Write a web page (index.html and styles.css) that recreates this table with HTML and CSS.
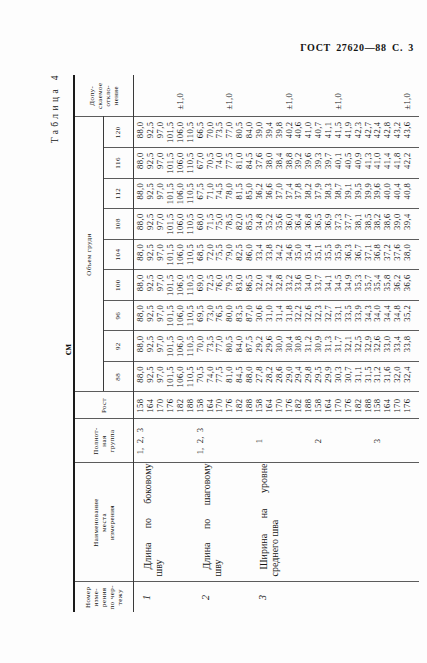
FILE: index.html
```html
<!DOCTYPE html>
<html lang="ru">
<head>
<meta charset="utf-8">
<title>ГОСТ 27620—88 С. 3</title>
<link rel="stylesheet" href="styles.css">
</head>
<body>
<div class="runhead">ГОСТ 27620—88 С. 3</div>
<div class="rotbox">
<div class="rot">
<div class="caption">Таблица 4</div>
<div class="unit">см</div>
<table class="tbl">
<colgroup>
<col class="c-no"><col class="c-name"><col class="c-grp"><col class="c-rost">
<col class="c-v"><col class="c-v"><col class="c-v"><col class="c-v"><col class="c-v"><col class="c-v"><col class="c-v"><col class="c-v"><col class="c-v">
<col class="c-tol">
</colgroup>
<thead>
<tr class="h1">
<th rowspan="2" class="first hno">Номер<br>изме-<br>рения<br>по чер-<br>тежу</th>
<th rowspan="2" class="hname">Наименование<br>места<br>измерения</th>
<th rowspan="2" class="hgrp">Полнот-<br>ная<br>группа</th>
<th rowspan="2" class="hrost">Рост</th>
<th colspan="9" class="hgroup">Объем груди</th>
<th rowspan="2" class="last htol">Допу-<br>скаемое<br>откло-<br>нение</th>
</tr>
<tr class="h2">
<th>88</th><th>92</th><th>96</th><th>100</th><th>104</th><th>108</th><th>112</th><th>116</th><th>120</th>
</tr>
</thead>
<tbody>
<tr class="gap"><td class="first"></td><td></td><td></td><td></td><td></td><td></td><td></td><td></td><td></td><td></td><td></td><td></td><td></td><td class="last"></td></tr>

<tr class="d"><td class="no first" rowspan="6">1</td><td class="name" rowspan="6"><div class="l1">Длина по боковому</div><div class="l2">шву</div></td><td class="grp">1, 2, 3</td><td class="rost">158</td><td>88,0</td><td>88,0</td><td>88,0</td><td>88,0</td><td>88,0</td><td>88,0</td><td>88,0</td><td>88,0</td><td>88,0</td><td class="tol last"></td></tr>
<tr class="d"><td class="grp"></td><td class="rost">164</td><td>92,5</td><td>92,5</td><td>92,5</td><td>92,5</td><td>92,5</td><td>92,5</td><td>92,5</td><td>92,5</td><td>92,5</td><td class="tol last"></td></tr>
<tr class="d"><td class="grp"></td><td class="rost">170</td><td>97,0</td><td>97,0</td><td>97,0</td><td>97,0</td><td>97,0</td><td>97,0</td><td>97,0</td><td>97,0</td><td>97,0</td><td class="tol last"></td></tr>
<tr class="d"><td class="grp"></td><td class="rost">176</td><td>101,5</td><td>101,5</td><td>101,5</td><td>101,5</td><td>101,5</td><td>101,5</td><td>101,5</td><td>101,5</td><td>101,5</td><td class="tol last"></td></tr>
<tr class="d"><td class="grp"></td><td class="rost">182</td><td>106,0</td><td>106,0</td><td>106,0</td><td>106,0</td><td>106,0</td><td>106,0</td><td>106,0</td><td>106,0</td><td>106,0</td><td class="tol last">±1,0</td></tr>
<tr class="d"><td class="grp"></td><td class="rost">188</td><td>110,5</td><td>110,5</td><td>110,5</td><td>110,5</td><td>110,5</td><td>110,5</td><td>110,5</td><td>110,5</td><td>110,5</td><td class="tol last"></td></tr>

<tr class="d"><td class="no first" rowspan="6">2</td><td class="name" rowspan="6"><div class="l1">Длина по шаговому</div><div class="l2">шву</div></td><td class="grp">1, 2, 3</td><td class="rost">158</td><td>70,5</td><td>70,0</td><td>69,5</td><td>69,0</td><td>68,5</td><td>68,0</td><td>67,5</td><td>67,0</td><td>66,5</td><td class="tol last"></td></tr>
<tr class="d"><td class="grp"></td><td class="rost">164</td><td>74,0</td><td>73,5</td><td>73,0</td><td>72,5</td><td>72,0</td><td>71,5</td><td>71,0</td><td>70,5</td><td>70,0</td><td class="tol last"></td></tr>
<tr class="d"><td class="grp"></td><td class="rost">170</td><td>77,5</td><td>77,0</td><td>76,5</td><td>76,0</td><td>75,5</td><td>75,0</td><td>74,5</td><td>74,0</td><td>73,5</td><td class="tol last"></td></tr>
<tr class="d"><td class="grp"></td><td class="rost">176</td><td>81,0</td><td>80,5</td><td>80,0</td><td>79,5</td><td>79,0</td><td>78,5</td><td>78,0</td><td>77,5</td><td>77,0</td><td class="tol last">±1,0</td></tr>
<tr class="d"><td class="grp"></td><td class="rost">182</td><td>84,5</td><td>84,0</td><td>83,5</td><td>83,0</td><td>82,5</td><td>82,0</td><td>81,5</td><td>81,0</td><td>80,5</td><td class="tol last"></td></tr>
<tr class="d"><td class="grp"></td><td class="rost">188</td><td>88,0</td><td>87,5</td><td>87,0</td><td>86,5</td><td>86,0</td><td>85,5</td><td>85,0</td><td>84,5</td><td>84,0</td><td class="tol last"></td></tr>

<tr class="d"><td class="no first g3" rowspan="16">3</td><td class="name g3" rowspan="16"><div class="l1">Ширина на уровне</div><div class="l2">среднего шва</div></td><td class="grp">1</td><td class="rost">158</td><td>27,8</td><td>29,2</td><td>30,6</td><td>32,0</td><td>33,4</td><td>34,8</td><td>36,2</td><td>37,6</td><td>39,0</td><td class="tol last"></td></tr>
<tr class="d"><td class="grp"></td><td class="rost">164</td><td>28,2</td><td>29,6</td><td>31,0</td><td>32,4</td><td>33,8</td><td>35,2</td><td>36,6</td><td>38,0</td><td>39,4</td><td class="tol last"></td></tr>
<tr class="d"><td class="grp"></td><td class="rost">170</td><td>28,6</td><td>30,0</td><td>31,4</td><td>32,8</td><td>34,2</td><td>35,6</td><td>37,0</td><td>38,4</td><td>39,8</td><td class="tol last"></td></tr>
<tr class="d"><td class="grp"></td><td class="rost">176</td><td>29,0</td><td>30,4</td><td>31,8</td><td>33,2</td><td>34,6</td><td>36,0</td><td>37,4</td><td>38,8</td><td>40,2</td><td class="tol last">±1,0</td></tr>
<tr class="d"><td class="grp"></td><td class="rost">182</td><td>29,4</td><td>30,8</td><td>32,2</td><td>33,6</td><td>35,0</td><td>36,4</td><td>37,8</td><td>39,2</td><td>40,6</td><td class="tol last"></td></tr>
<tr class="d"><td class="grp"></td><td class="rost">188</td><td>29,8</td><td>31,2</td><td>32,6</td><td>34,0</td><td>35,4</td><td>36,8</td><td>38,2</td><td>39,6</td><td>41,0</td><td class="tol last"></td></tr>
<tr class="d"><td class="grp">2</td><td class="rost">158</td><td>29,5</td><td>30,9</td><td>32,3</td><td>33,7</td><td>35,1</td><td>36,5</td><td>37,9</td><td>39,3</td><td>40,7</td><td class="tol last"></td></tr>
<tr class="d"><td class="grp"></td><td class="rost">164</td><td>29,9</td><td>31,3</td><td>32,7</td><td>34,1</td><td>35,5</td><td>36,9</td><td>38,3</td><td>39,7</td><td>41,1</td><td class="tol last"></td></tr>
<tr class="d"><td class="grp"></td><td class="rost">170</td><td>30,3</td><td>31,7</td><td>33,1</td><td>34,5</td><td>35,9</td><td>37,3</td><td>38,7</td><td>40,1</td><td>41,5</td><td class="tol last">±1,0</td></tr>
<tr class="d"><td class="grp"></td><td class="rost">176</td><td>30,7</td><td>32,1</td><td>33,5</td><td>34,9</td><td>36,3</td><td>37,7</td><td>39,1</td><td>40,5</td><td>41,9</td><td class="tol last"></td></tr>
<tr class="d"><td class="grp"></td><td class="rost">182</td><td>31,1</td><td>32,5</td><td>33,9</td><td>35,3</td><td>36,7</td><td>38,1</td><td>39,5</td><td>40,9</td><td>42,3</td><td class="tol last"></td></tr>
<tr class="d"><td class="grp"></td><td class="rost">188</td><td>31,5</td><td>32,9</td><td>34,3</td><td>35,7</td><td>37,1</td><td>38,5</td><td>39,9</td><td>41,3</td><td>42,7</td><td class="tol last"></td></tr>
<tr class="d"><td class="grp">3</td><td class="rost">158</td><td>31,2</td><td>32,6</td><td>34,0</td><td>35,4</td><td>36,8</td><td>38,2</td><td>39,6</td><td>41,0</td><td>42,4</td><td class="tol last"></td></tr>
<tr class="d"><td class="grp"></td><td class="rost">164</td><td>31,6</td><td>33,0</td><td>34,4</td><td>35,8</td><td>37,2</td><td>38,6</td><td>40,0</td><td>41,4</td><td>42,8</td><td class="tol last"></td></tr>
<tr class="d"><td class="grp"></td><td class="rost">170</td><td>32,0</td><td>33,4</td><td>34,8</td><td>36,2</td><td>37,6</td><td>39,0</td><td>40,4</td><td>41,8</td><td>43,2</td><td class="tol last"></td></tr>
<tr class="d"><td class="grp"></td><td class="rost">176</td><td>32,4</td><td>33,8</td><td>35,2</td><td>36,6</td><td>38,0</td><td>39,4</td><td>40,8</td><td>42,2</td><td>43,6</td><td class="tol last">±1,0</td></tr>

<tr class="gap-end"><td class="first"></td><td></td><td></td><td></td><td></td><td></td><td></td><td></td><td></td><td></td><td></td><td></td><td></td><td class="last"></td></tr>
</tbody>
</table>
</div>
</div>
</body>
</html>
```

FILE: styles.css
```css
* { box-sizing: border-box; }
html, body { margin: 0; padding: 0; }
body {
  width: 427px;
  height: 663px;
  overflow: hidden;
  background: #fdfdfd;
  color: #141414;
  font-family: "Liberation Serif", "Times New Roman", serif;
}
.runhead {
  height: 53px;
  padding: 42px 13px 0 0;
  text-align: right;
  font-size: 10px;
  line-height: 11px;
  font-weight: bold;
  letter-spacing: 0.7px;
  word-spacing: 2px;
}
.rotbox {
  margin: 22px 0 0 48px;
  width: 370px;
  height: 537px;
}
.rot {
  width: 537px;
  height: 370px;
  transform-origin: 0 0;
  transform: rotate(-90deg) translateX(-100%);
}
.caption {
  height: 14px;
  line-height: 14px;
  font-size: 9.5px;
  letter-spacing: 3.4px;
  text-align: right;
  margin-right: -3px;
}
.unit {
  height: 11px;
  line-height: 11px;
  font-size: 10px;
  font-weight: bold;
  text-align: center;
  padding-right: 12px;
}
.tbl {
  width: 537px;
  table-layout: fixed;
  border-collapse: collapse;
  border-top: 2px solid #1a1a1a;
}
.c-no { width: 30px; }
.c-name { width: 119px; }
.c-grp { width: 44px; }
.c-rost { width: 27px; }
.c-v { width: 30.55px; }
.c-tol { width: 42px; }
.tbl th, .tbl td {
  padding: 0;
  border-left: 1px solid #5c5c5c;
  border-right: 1px solid #5c5c5c;
}
.tbl .first { border-left: none; }
.tbl .last { border-right: none; }
.tbl th {
  font-weight: normal;
  font-size: 7px;
  line-height: 8px;
  letter-spacing: 0.4px;
  text-align: center;
  vertical-align: middle;
  border-bottom: 1px solid #3a3a3a;
}
.h1 { height: 29px; }
.h2 { height: 30px; }
.hno { font-size: 6.5px; line-height: 6.8px; }
.hname { letter-spacing: 0.8px; }
.hgroup { letter-spacing: 1px; padding-right: 18px; }
.h2 th { font-size: 7px; }
.htol { font-size: 6.8px; line-height: 7.4px; }

.tbl td {
  font-size: 8.5px;
  line-height: 9px;
  white-space: nowrap;
  text-align: right;
  padding-right: 4px;
  letter-spacing: 0.5px;
  vertical-align: middle;
}
.d { height: 9.875px; }
.gap { height: 3px; }
.gap-end { height: 6px; }
.tbl td.rost { text-align: center; padding-right: 0; letter-spacing: 0.5px; }
.tbl td.grp { text-align: center; padding-right: 0; font-size: 8.5px; word-spacing: 2px; letter-spacing: 0.2px; }
.tbl td.tol { text-align: left; padding: 0 0 0 7px; font-size: 8.5px; letter-spacing: 0.3px; }
.tbl td.no {
  vertical-align: top;
  text-align: center;
  font-style: italic;
  font-size: 10px;
  line-height: 11px;
  padding: 5px 0 0 0;
}
.tbl td.no.g3 { padding-top: 2px; }
.tbl td.name {
  vertical-align: top;
  text-align: left;
  white-space: normal;
  font-size: 10px;
  line-height: 11px;
  letter-spacing: 0;
  padding: 6px 0 0 5px;
}
.tbl td.name.g3 { padding-top: 3px; }
.name .l1 {
  text-align: justify;
  text-align-last: justify;
  text-indent: 7px;
}
.name .l2 { text-align: left; }
```
